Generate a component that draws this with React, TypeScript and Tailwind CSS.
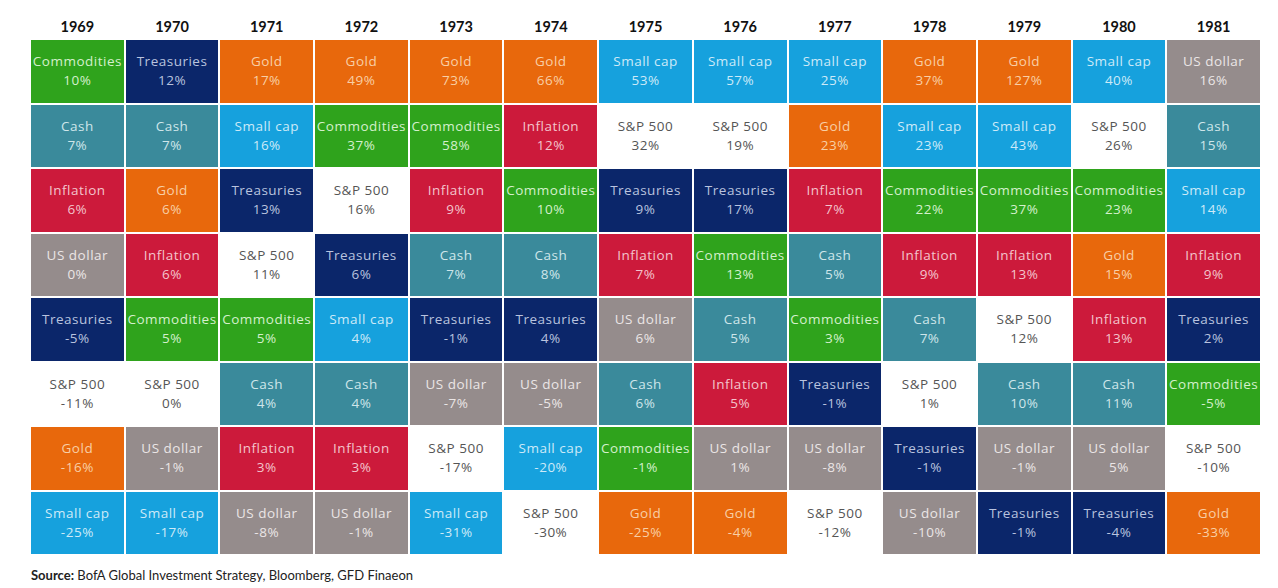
import { Fragment } from "react";

const colors: Record<string, string> = {
  Commodities: "bg-[#2fa31c] text-[#d4f0cc]",
  Treasuries: "bg-[#0b266a] text-[#b9c3df]",
  Gold: "bg-[#e8680c] text-[#f8cfa6]",
  Cash: "bg-[#3a8a9b] text-[#cfe6ea]",
  "Small cap": "bg-[#16a1dd] text-[#cdeaf8]",
  Inflation: "bg-[#cc1a3b] text-[#f3c4cc]",
  "US dollar": "bg-[#958c8c] text-[#ebe6e6]",
  "S&P 500": "bg-white text-[#555555]",
};

const years: [string, [string, string][]][] = [
  ["1969", [["Commodities", "10%"], ["Cash", "7%"], ["Inflation", "6%"], ["US dollar", "0%"], ["Treasuries", "-5%"], ["S&P 500", "-11%"], ["Gold", "-16%"], ["Small cap", "-25%"]]],
  ["1970", [["Treasuries", "12%"], ["Cash", "7%"], ["Gold", "6%"], ["Inflation", "6%"], ["Commodities", "5%"], ["S&P 500", "0%"], ["US dollar", "-1%"], ["Small cap", "-17%"]]],
  ["1971", [["Gold", "17%"], ["Small cap", "16%"], ["Treasuries", "13%"], ["S&P 500", "11%"], ["Commodities", "5%"], ["Cash", "4%"], ["Inflation", "3%"], ["US dollar", "-8%"]]],
  ["1972", [["Gold", "49%"], ["Commodities", "37%"], ["S&P 500", "16%"], ["Treasuries", "6%"], ["Small cap", "4%"], ["Cash", "4%"], ["Inflation", "3%"], ["US dollar", "-1%"]]],
  ["1973", [["Gold", "73%"], ["Commodities", "58%"], ["Inflation", "9%"], ["Cash", "7%"], ["Treasuries", "-1%"], ["US dollar", "-7%"], ["S&P 500", "-17%"], ["Small cap", "-31%"]]],
  ["1974", [["Gold", "66%"], ["Inflation", "12%"], ["Commodities", "10%"], ["Cash", "8%"], ["Treasuries", "4%"], ["US dollar", "-5%"], ["Small cap", "-20%"], ["S&P 500", "-30%"]]],
  ["1975", [["Small cap", "53%"], ["S&P 500", "32%"], ["Treasuries", "9%"], ["Inflation", "7%"], ["US dollar", "6%"], ["Cash", "6%"], ["Commodities", "-1%"], ["Gold", "-25%"]]],
  ["1976", [["Small cap", "57%"], ["S&P 500", "19%"], ["Treasuries", "17%"], ["Commodities", "13%"], ["Cash", "5%"], ["Inflation", "5%"], ["US dollar", "1%"], ["Gold", "-4%"]]],
  ["1977", [["Small cap", "25%"], ["Gold", "23%"], ["Inflation", "7%"], ["Cash", "5%"], ["Commodities", "3%"], ["Treasuries", "-1%"], ["US dollar", "-8%"], ["S&P 500", "-12%"]]],
  ["1978", [["Gold", "37%"], ["Small cap", "23%"], ["Commodities", "22%"], ["Inflation", "9%"], ["Cash", "7%"], ["S&P 500", "1%"], ["Treasuries", "-1%"], ["US dollar", "-10%"]]],
  ["1979", [["Gold", "127%"], ["Small cap", "43%"], ["Commodities", "37%"], ["Inflation", "13%"], ["S&P 500", "12%"], ["Cash", "10%"], ["US dollar", "-1%"], ["Treasuries", "-1%"]]],
  ["1980", [["Small cap", "40%"], ["S&P 500", "26%"], ["Commodities", "23%"], ["Gold", "15%"], ["Inflation", "13%"], ["Cash", "11%"], ["US dollar", "5%"], ["Treasuries", "-4%"]]],
  ["1981", [["US dollar", "16%"], ["Cash", "15%"], ["Small cap", "14%"], ["Inflation", "9%"], ["Treasuries", "2%"], ["Commodities", "-5%"], ["S&P 500", "-10%"], ["Gold", "-33%"]]],
];

export default function App() {
  return (
    <div className="w-[1278px] h-[588px] bg-white pl-[31px] pt-[16px] font-['Open_Sans',sans-serif]">
      <div className="grid w-[1229px] grid-cols-13 grid-rows-[22px_repeat(8,62.5px)] grid-flow-col gap-[2px]">
        {years.map(([year, cells]) => (
          <Fragment key={year}>
            <div className="flex items-center justify-center text-[14.5px] font-bold text-[#111] font-['Lato',sans-serif]">
              {year}
            </div>
            {cells.map(([name, pct], i) => (
              <div
                key={i}
                className={`flex flex-col items-center justify-center text-[13.5px] leading-[19px] tracking-[0.5px] ${colors[name]}`}
              >
                <span className="whitespace-nowrap">{name}</span>
                <span>{pct}</span>
              </div>
            ))}
          </Fragment>
        ))}
      </div>
      <div className="mt-[12px] text-[13px] text-[#222] font-['Lato',sans-serif]">
        <span className="font-bold">Source:</span> BofA Global Investment Strategy, Bloomberg, GFD Finaeon
      </div>
    </div>
  );
}
